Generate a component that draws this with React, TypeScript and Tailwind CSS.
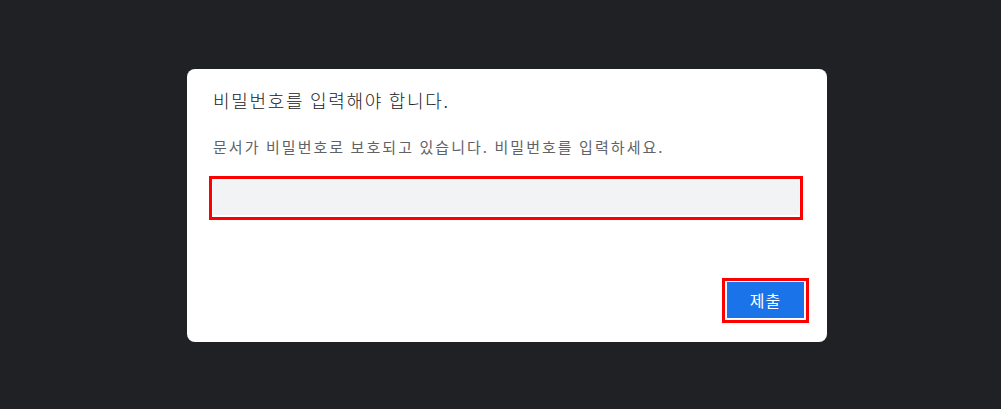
import React from 'react'

const font = { fontFamily: '"Noto Sans CJK KR", "Noto Sans", sans-serif' }

function PasswordDialog() {
  return (
    <div className="w-[640px] h-[273px] rounded-lg bg-white pt-[19px] pb-[19px] pl-[26px] pr-[24px] flex flex-col">
      <h1 className="text-[18px] leading-[24px] tracking-[1.7px] text-[#202124] font-light">
        비밀번호를 입력해야 합니다.
      </h1>
      <p className="mt-[25px] text-[15px] leading-[20px] tracking-[2.05px] text-[#5f6368]">
        문서가 비밀번호로 보호되고 있습니다. 비밀번호를 입력하세요.
      </p>

      {/* input */}
      <div className="mt-[19px] -ml-[4px] border-[3px] border-[#ff0000] px-[1px] py-[2px]">
        <input
          type="password"
          className="block w-full h-[34px] bg-[#f1f3f4] outline-none px-3 text-sm text-[#202124]"
        />
      </div>

      <div className="mt-auto flex justify-end -mr-[6px]">
        <div className="border-[3px] border-[#ff0000] px-[2px] pt-[1px] pb-[2px]">
          <button className="w-[77px] h-[36px] bg-[#1a73e8] text-white text-[16px] leading-none tracking-[1px]">
            제출
          </button>
        </div>
      </div>
    </div>
  )
}

export default function App() {
  return (
    <div className="w-[1001px] h-[409px] bg-[#202124] pt-[69px] pl-[187px]" style={font}>
      <PasswordDialog />
    </div>
  )
}
